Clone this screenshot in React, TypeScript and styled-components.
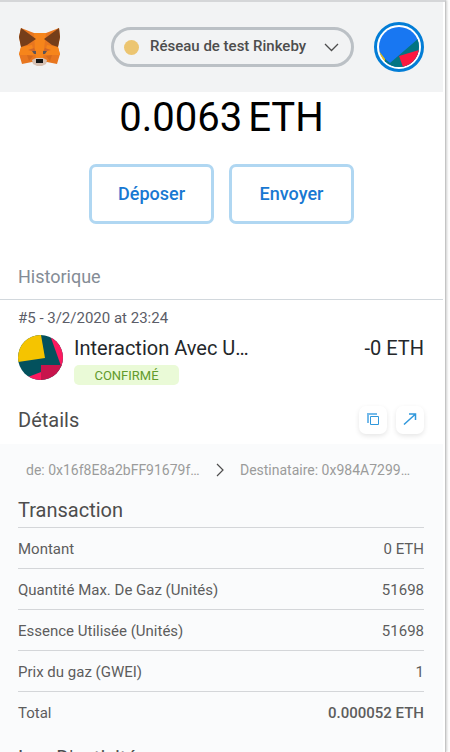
import React from "react";
import styled, { createGlobalStyle } from "styled-components";

const GlobalStyle = createGlobalStyle`
  *, *::before, *::after { box-sizing: border-box; }
  body {
    margin: 0;
    background: #fdfdfd;
    font-family: Roboto, "Liberation Sans", sans-serif;
  }
  h2, h3, p { margin: 0; padding: 0; font-weight: 400; }
  button { font-family: inherit; cursor: pointer; }
`;

const Popup = styled.main`
  height: 100vh;
  margin-right: 4px;
  padding-right: 2px;
  overflow: hidden;
  background: #fff;
  border-top: 2px solid #d5d6d8;
  border-right: 1px solid #c4c4c4;
  box-shadow: 1px 0 2px #d0d0d0;
`;

const Header = styled.header`
  display: flex;
  align-items: center;
  justify-content: space-between;
  height: 90px;
  padding: 0 19px 0 18px;
  background: #f2f3f4;
`;

const LogoButton = styled.button`
  display: flex;
  padding: 0;
  border: 0;
  background: none;
`;

const NetworkButton = styled.button`
  display: flex;
  align-items: center;
  width: 243px;
  height: 40px;
  margin-left: 30px;
  padding: 0 12px 0 10px;
  border: 3px solid #bbc0c5;
  border-radius: 20px;
  background: none;
  color: #4d4d4d;
  font-size: 15px;
  font-weight: 500;
`;

const NetworkDot = styled.span`
  width: 15px;
  height: 15px;
  margin-right: 11px;
  border-radius: 50%;
  background: #ecc571;
`;

const NetworkName = styled.span`
  flex: 1;
  padding-bottom: 2px;
  text-align: left;
`;

const AccountButton = styled.button`
  display: flex;
  width: 50px;
  height: 50px;
  padding: 2px;
  border: 3px solid #037dd6;
  border-radius: 50%;
  background: #fff;
`;

const Balance = styled.p`
  display: flex;
  justify-content: center;
  gap: 6px;
  color: #000;
  font-size: 40px;
  line-height: 52px;
`;

const Actions = styled.div`
  display: flex;
  justify-content: center;
  gap: 15px;
  margin-top: 20px;
`;

const ActionButton = styled.button`
  width: 125px;
  height: 60px;
  padding: 0 0 2px;
  border: 3px solid #b0d7f2;
  border-radius: 7px;
  background: #fff;
  color: #1878d2;
  font-size: 18px;
  font-weight: 500;
`;

const HistoryTitle = styled.h2`
  margin-top: 30px;
  padding: 12px 18px;
  border-bottom: 1px solid #d2d8dd;
  color: #848c96;
  font-size: 18px;
  line-height: 21px;
`;

const Item = styled.article`
  display: grid;
  grid-template-columns: 45px auto 1fr;
  grid-template-rows: 26px 26px 20px;
  column-gap: 11px;
  padding: 9px 19px 15px 18px;
`;

const ItemDate = styled.p`
  grid-column: 1 / -1;
  color: #5b5d67;
  font-size: 15px;
  line-height: 18px;
`;

const ItemIcon = styled.div`
  grid-row: 2 / 4;
  display: flex;
`;

const ItemName = styled.h3`
  color: #24272a;
  font-size: 20px;
  line-height: 26px;
  white-space: nowrap;
`;

const ItemAmount = styled.p`
  color: #24272a;
  font-size: 20px;
  line-height: 26px;
  text-align: right;
`;

const Status = styled.span`
  grid-column: 2;
  width: 105px;
  height: 20px;
  margin-top: 4px;
  border-radius: 5px;
  background: #eafad7;
  color: #629b2c;
  font-size: 13px;
  line-height: 21px;
  text-align: center;
`;

const DetailsHeader = styled.div`
  display: flex;
  align-items: center;
  gap: 9px;
  height: 48px;
  padding: 0 19px 0 18px;
`;

const SectionTitle = styled.h3`
  flex: 1;
  color: #4d4d4d;
  font-size: 20px;
  line-height: 24px;
`;

const IconButton = styled.button`
  display: flex;
  align-items: center;
  justify-content: center;
  width: 28px;
  height: 28px;
  padding: 0 0 2px;
  border: 0;
  border-radius: 7px;
  background: #fff;
  box-shadow: 0 2px 5px rgba(0, 0, 0, 0.1);
`;

const DetailsBody = styled.section`
  padding: 0 19px 0 18px;
  background: #fafbfc;
`;

const Parties = styled.div`
  display: flex;
  align-items: center;
  justify-content: space-between;
  height: 51px;
  padding: 0 14px 0 8px;
`;

const Party = styled.p`
  color: #9b9b9b;
  font-size: 14px;
  line-height: 18px;
  white-space: nowrap;
`;

const Breakdown = styled.div`
  padding-top: 3px;
`;

const Row = styled.div`
  display: flex;
  align-items: center;
  justify-content: space-between;
  height: 41px;
  padding-top: 2px;
  border-top: 1px solid #d4d6d9;
  color: #5d5d5d;
  font-size: 15px;
`;

const RowValue = styled.span<{ $strong?: boolean }>`
  font-weight: ${(p) => (p.$strong ? 500 : 400)};
`;

const TitleRow = styled.div`
  padding-bottom: 5px;
`;

const ActivityLog = styled.div`
  padding-top: 14px;
`;

const rows = [
  { label: "Montant", value: "0 ETH" },
  { label: "Quantité Max. De Gaz (Unités)", value: "51698" },
  { label: "Essence Utilisée (Unités)", value: "51698" },
  { label: "Prix du gaz (GWEI)", value: "1" },
  { label: "Total", value: "0.000052 ETH", strong: true },
];

const Fox = () => (
  <svg width="43" height="40" viewBox="0 0 43 40" aria-hidden="true">
    <path d="M3 1 16 6H28L41 1 42 10 40 20 42 27 39 37 29 35 25 36H18L14 35 4 37 1 27 3 20 1 10Z" fill="#e8761f" />
    <path d="M16 6H28L26 22 25 32H18L17 22Z" fill="#f6851b" />
    <path d="M3 20 14 18 17 28 1 28ZM40 20 29 18 26 28 42 28Z" fill="#f6851b" />
    <path d="M3 1 18 12 9 18 3 20 1 10ZM41 1 26 12 34 18 40 20 42 10Z" fill="#763e1a" />
    <path d="M10 23 16 21 18 25ZM33 23 27 21 25 25Z" fill="#d0672a" />
    <path d="M14 24 18 24 18 27 16 27ZM29 24 25 24 25 27 27 27Z" fill="#5d5458" />
    <path d="M9 28 15 29 11 34ZM34 28 28 29 32 34Z" fill="#d66a1b" />
    <path d="M14 33 18 31H25L29 33 28 37 24 39H19L15 37Z" fill="#d7c1b3" />
    <path d="M18 32H25V36H18Z" fill="#161616" />
  </svg>
);

const AccountIcon = () => (
  <svg width="40" height="40" viewBox="0 0 40 40" aria-hidden="true">
    <clipPath id="account-clip"><circle cx="20" cy="20" r="20" /></clipPath>
    <g clipPath="url(#account-clip)">
      <path d="M0 0H40V40H0Z" fill="#1877f2" />
      <path d="M40 11 11 36 6 32V40H40Z" fill="#037583" />
      <path d="M20 29 40 23V40H24Z" fill="#fb1840" />
      <path d="M0 24 6 32V40H0Z" fill="#f5c400" />
    </g>
  </svg>
);

const ContractIcon = () => (
  <svg width="45" height="45" viewBox="0 0 45 45" aria-hidden="true">
    <clipPath id="contract-clip"><circle cx="22.5" cy="22.5" r="22.5" /></clipPath>
    <g clipPath="url(#contract-clip)">
      <path d="M0 0H45V45H0Z" fill="#03515d" />
      <path d="M0 0H23L27 23 0 27Z" fill="#f5c400" />
      <path d="M32 0H45V31H43Z" fill="#fc195f" />
      <path d="M10 42 23 37V45H10Z" fill="#fc195f" />
      <path d="M23 30H45V45H23Z" fill="#c7144c" />
    </g>
  </svg>
);

const CopyIcon = () => (
  <svg width="14" height="14" viewBox="0 0 14 14" fill="none" aria-hidden="true">
    <path d="M2 11V2H11" stroke="#75baea" strokeWidth="2" />
    <path d="M4.5 4.5H12.5V12.5H4.5Z" stroke="#3098dc" strokeWidth="1" />
  </svg>
);

const ArrowIcon = () => (
  <svg width="14" height="14" viewBox="0 0 14 14" fill="none" stroke="#3098dc" strokeWidth="1.5" aria-hidden="true">
    <path d="M1 12.5 12 2.5M6 2H12.5V8" />
  </svg>
);

export default function App() {
  return (
    <>
      <GlobalStyle />
      <Popup>
        <Header>
          <LogoButton aria-label="MetaMask"><Fox /></LogoButton>
          <NetworkButton>
            <NetworkDot />
            <NetworkName>Réseau de test Rinkeby</NetworkName>
            <svg width="15" height="9" viewBox="0 0 15 9" fill="none" stroke="#4d4d4d" strokeWidth="1.3" aria-hidden="true">
              <path d="M1 1 7.5 7.5 14 1" />
            </svg>
          </NetworkButton>
          <AccountButton aria-label="Compte"><AccountIcon /></AccountButton>
        </Header>

        <Balance><span>0.0063</span><span>ETH</span></Balance>
        <Actions>
          <ActionButton>Déposer</ActionButton>
          <ActionButton>Envoyer</ActionButton>
        </Actions>

        <HistoryTitle>Historique</HistoryTitle>
        <Item>
          <ItemDate>#5 - 3/2/2020 at 23:24</ItemDate>
          <ItemIcon><ContractIcon /></ItemIcon>
          <ItemName>Interaction Avec U…</ItemName>
          <ItemAmount>-0 ETH</ItemAmount>
          <Status>CONFIRMÉ</Status>
        </Item>

        <DetailsHeader>
          <SectionTitle>Détails</SectionTitle>
          <IconButton aria-label="Copier"><CopyIcon /></IconButton>
          <IconButton aria-label="Ouvrir"><ArrowIcon /></IconButton>
        </DetailsHeader>
        <DetailsBody>
          <Parties>
            <Party>de: 0x16f8E8a2bFF91679f…</Party>
            <svg width="16" height="16" viewBox="0 0 16 16" fill="none" stroke="#4d4d4d" strokeWidth="1.2" aria-hidden="true">
              <path d="M5 2 11 8 5 14" />
            </svg>
            <Party>Destinataire: 0x984A7299…</Party>
          </Parties>
          <Breakdown>
            <TitleRow><SectionTitle>Transaction</SectionTitle></TitleRow>
            {rows.map((row) => (
              <Row key={row.label}>
                <span>{row.label}</span>
                <RowValue $strong={row.strong}>{row.value}</RowValue>
              </Row>
            ))}
          </Breakdown>
          <ActivityLog><SectionTitle>Log D'activité</SectionTitle></ActivityLog>
        </DetailsBody>
      </Popup>
    </>
  );
}
